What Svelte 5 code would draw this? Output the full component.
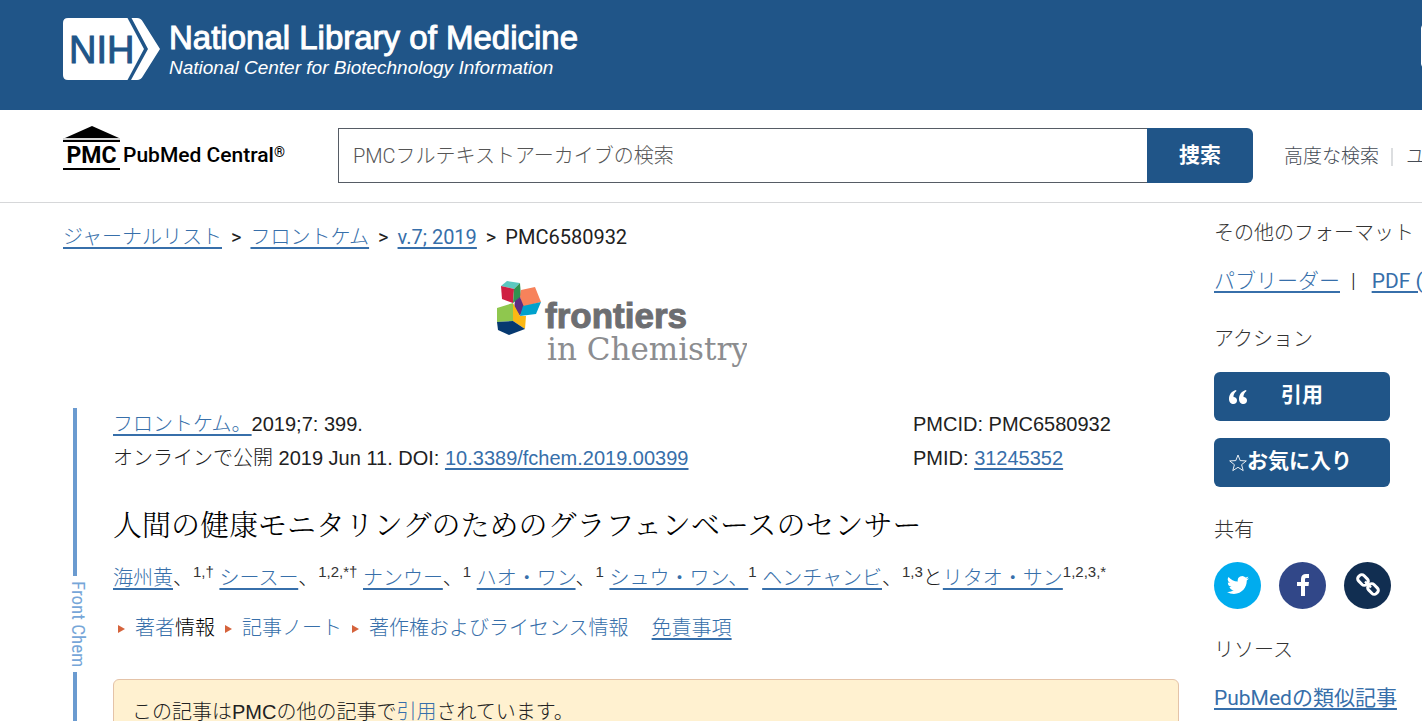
<script>
  let query = $state('');
</script>

<div class="page">
  <header class="top">
    <a class="nlm" href="#home" aria-label="NCBI home">
      <svg width="97" height="62" viewBox="0 0 97 62" aria-hidden="true">
        <path fill="#fff" d="M5 0H64.500L81 31L64.500 62H5Q0 62 0 57V5Q0 0 5 0Z" />
        <path fill="#fff" d="M68.500 0H74Q78 0 80 4L97 31L80 58Q78 62 74 62H68L85 31Z" />
        <text x="6" y="45" class="nih">NIH</text>
      </svg>
      <span class="names">
        <span class="name">National Library of Medicine</span>
        <span class="center">National Center for Biotechnology Information</span>
      </span>
    </a>
    <button class="login" aria-label="Log in"></button>
  </header>

  <div class="searchbar">
    <a class="pmc" href="#pmc">
      <span class="temple">
        <svg width="58" height="18" viewBox="0 0 58 18" aria-hidden="true">
          <path d="M29 0L56 12H2Z" />
          <path fill="#d8d8d8" d="M0 12H57V14H0Z" />
          <path d="M0 14H57V16H0Z" />
        </svg>
        <b>PMC</b>
      </span>
      <span class="central">PubMed Central<span class="reg">®</span></span>
    </a>
    <form class="search" role="search" onsubmit={(e) => e.preventDefault()}>
      <input type="search" bind:value={query} aria-label="PMCフルテキストアーカイブの検索" placeholder="PMCフルテキストアーカイブの検索" />
      <button type="submit">捜索</button>
    </form>
    <nav class="help">
      <a href="#advanced">高度な検索</a>
      <a href="#guide">ユーザーガイド</a>
    </nav>
  </div>

  <div class="body">
    <main>
      <nav class="crumbs">
        <a href="#journals">ジャーナルリスト</a><i>&gt;</i><a href="#front">フロントケム</a><i>&gt;</i><a href="#v7">v.7; 2019</a><i>&gt;</i><span>PMC6580932</span>
      </nav>

      <div class="journal">
        <svg width="252" height="92" viewBox="0 0 252 92" role="img" aria-label="frontiers in Chemistry">
          <path fill="#5cc8c0" d="M6 6L12 1L25 3L19 9Z" />
          <path fill="#cf1f42" d="M6 6L19 9L18 23L7 19Z" />
          <path fill="#2f9150" d="M19 9L25 3L26 17L18 23Z" />
          <path fill="#f7825b" d="M26 10L40 7L46 22L28 27L25 17Z" />
          <path fill="#5b2e82" d="M20 21L25 17L29 27L25 36L19 28Z" />
          <path fill="#00a1cc" d="M28 26L46 22L41 34L25 36Z" />
          <path fill="#8fc74e" d="M2 28L18 23L18 41L2 42Z" />
          <path fill="#fbb814" d="M18 23L25 36L31 36L30 49L18 41Z" />
          <path fill="#063970" d="M2 42L18 41L30 49L14 55L3 50Z" />
          <text x="50" y="48" class="frontiers">frontiers</text>
          <text x="52" y="80" class="chem">in Chemistry</text>
        </svg>
      </div>

      <div class="article">
        <div class="side" aria-hidden="true">
          <span class="rule upper"></span>
          <span class="label">Front Chem</span>
          <span class="rule lower"></span>
        </div>
        <div class="content">
          <div class="meta">
            <div>
              <a href="#journal">フロントケム。</a>2019;7: 399.<br />
              オンラインで公開 2019 Jun 11. DOI: <a href="#doi">10.3389/fchem.2019.00399</a>
            </div>
            <div class="ids">
              PMCID: PMC6580932<br />
              PMID: <a href="#pmid">31245352</a>
            </div>
          </div>
          <h1>人間の健康モニタリングのためのグラフェンベースのセンサー</h1>
          <p class="authors">
            <a href="#a1">海州黄</a>、<sup>1,†</sup> <a href="#a2">シースー</a>、<sup>1,2,*†</sup> <a href="#a3">ナンウー</a>、<sup>1</sup> <a href="#a4">ハオ・ワン</a>、<sup>1</sup> <a href="#a5">シュウ・ワン、</a><sup>1</sup> <a href="#a6">ヘンチャンビ</a>、<sup>1,3</sup>と<a href="#a7">リタオ・サン</a><sup>1,2,3,*</sup>
          </p>
          <div class="notes">
            <a href="#info">著者<span>情報</span></a>
            <a href="#notes">記事ノート</a>
            <a href="#license">著作権およびライセンス情報</a>
            <a class="plain" href="#disclaimer">免責事項</a>
          </div>
          <div class="cited">この記事はPMCの他の記事で<a href="#cited">引用</a>されています。</div>
        </div>
      </div>
    </main>

    <aside>
      <h2>その他のフォーマット</h2>
      <div class="formats"><a href="#reader">パブリーダー</a><i>|</i><a href="#pdf">PDF (3.2M)</a></div>
      <h2>アクション</h2>
      <div class="actions">
        <button>
          <svg width="18" height="14" viewBox="0 0 18 14" aria-hidden="true">
            <path fill="#fff" d="M7 0C3 1 0 4 0 9C0 12 2 14 4.500 14C6.500 14 8 12.500 8 10.500C8 8.500 6.500 7 4.500 7C4.300 4.500 5.500 2.500 7.500 1ZM17 0C13 1 10 4 10 9C10 12 12 14 14.500 14C16.500 14 18 12.500 18 10.500C18 8.500 16.500 7 14.500 7C14.300 4.500 15.500 2.500 17.500 1Z" />
          </svg>
          <span class="cite">引用</span>
        </button>
        <button>
          <svg width="18" height="18" viewBox="0 0 18 18" aria-hidden="true">
            <path fill="none" stroke="#fff" stroke-width="0.900" d="M9 1L11.200 6.600L17.300 6.900L12.600 10.700L14.200 16.600L9 13.300L3.800 16.600L5.400 10.700L0.700 6.900L6.800 6.600Z" />
          </svg>
          <span>お気に入り</span>
        </button>
      </div>
      <h2>共有</h2>
      <div class="share">
        <a class="tw" href="#twitter" aria-label="Twitter">
          <svg width="22" height="22" viewBox="0 0 24 24"><path fill="#fff" d="M23.950 4.570a10 10 0 0 1-2.820.770 4.960 4.960 0 0 0 2.160-2.720c-.950.550-2 .950-3.130 1.180a4.920 4.920 0 0 0-8.380 4.480C7.690 8.090 4.070 6.130 1.640 3.160a4.920 4.920 0 0 0 1.520 6.570 4.900 4.900 0 0 1-2.230-.610v.060a4.920 4.920 0 0 0 3.950 4.830 5 5 0 0 1-2.210.080 4.940 4.940 0 0 0 4.600 3.420A9.870 9.870 0 0 1 0 19.540a14 14 0 0 0 7.550 2.210c9.050 0 14-7.500 14-13.980 0-.210 0-.420-.020-.630a9.940 9.940 0 0 0 2.420-2.570z" /></svg>
        </a>
        <a class="fb" href="#facebook" aria-label="Facebook">
          <svg width="14" height="24" viewBox="0 0 14 24"><path fill="#fff" d="M13 1V5H10.500C9.300 5 9 5.600 9 6.600V9H13L12.500 13H9V23H5V13H1V9H5V6C5 2.600 7 1 10 1Z" /></svg>
        </a>
        <a class="ln" href="#permalink" aria-label="Permalink">
          <svg width="24" height="24" viewBox="0 0 24 24" fill="none" stroke="#fff" stroke-width="3">
            <rect x="1.500" y="3.200" width="11" height="7.600" rx="3" transform="rotate(45 7 7)" />
            <rect x="11.500" y="12.200" width="11" height="7.600" rx="3" transform="rotate(45 17 16)" />
            <path d="M9 8.500L15 14.500" stroke-width="2.400" />
          </svg>
        </a>
      </div>
      <h2>リソース</h2>
      <a class="similar" href="#similar">PubMedの類似記事</a>
    </aside>
  </div>
</div>

<style>
  :global(body) { margin: 0; background: #fff; }
  .page {
    height: 100vh;
    overflow: hidden;
    color: #212121;
    font: 300 20px/30px Roboto, "Noto Sans CJK JP", sans-serif;
  }
  a { color: #376faa; text-decoration-thickness: 2px; text-underline-offset: 3px; }
  i { font-style: normal; }
  button { border: 0; cursor: pointer; font-family: inherit; color: #fff; background: #205588; }

  .top {
    box-sizing: border-box;
    height: 110px;
    padding: 18px 0 0 63px;
    display: flex;
    justify-content: space-between;
    background: #205588;
    overflow: hidden;
  }
  .nlm { display: flex; gap: 9px; color: #fff; text-decoration: none; font-family: "Liberation Sans", Arial, sans-serif; white-space: nowrap; }
  .nih { font: 400 38px "Liberation Sans", Arial, sans-serif; fill: #205588; stroke: #205588; stroke-width: 1px; }
  .names { display: flex; flex-direction: column; font-weight: 400; }
  .name { font-size: 33px; line-height: 40px; -webkit-text-stroke: 1px #fff; }
  .center { font-size: 19px; line-height: 20px; font-style: italic; }
  .login { box-sizing: border-box; width: 90px; height: 44px; margin: 6px -89px 0 0; flex: none; border: 1px solid #fff; border-radius: 4px; }

  .searchbar {
    box-sizing: border-box;
    height: 93px;
    padding: 18px 0 19px 63px;
    display: flex;
    border-bottom: 1px solid #d6d7d9;
  }
  .pmc { width: 275px; flex: none; display: flex; gap: 2px; color: #000; text-decoration: none; }
  .temple { width: 58px; height: 44px; margin-top: -2px; display: flex; flex-direction: column; align-items: center; }
  .temple svg { display: block; flex: none; }
  .temple b { font: 700 23px/24px Roboto, sans-serif; border-bottom: 2px solid #000; width: 57px; text-align: center; align-self: flex-start; }
  .central { font-weight: 500; font-size: 21px; line-height: 54px; display: flex; }
  .reg { font-size: 14px; line-height: 48px; }
  .search { flex: 1; display: flex; height: 55px; }
  .search input {
    box-sizing: border-box;
    flex: 1;
    min-width: 0;
    padding: 0 14px;
    border: 1px solid #565c65;
    border-right: 0;
    border-radius: 0;
    appearance: none;
    font: inherit;
  }
  .search input::placeholder { color: #555; opacity: 1; }
  .search button { width: 106px; padding: 0 0 5px; border-radius: 0 6px 6px 0; font-size: 21px; font-weight: 700; }
  .help { width: 138px; margin-left: 31px; display: flex; white-space: nowrap; font-size: 19px; line-height: 58px; }
  .help a { color: #464c55; text-decoration: none; }
  .help a + a { height: 58px; margin-left: 12px; display: flex; align-items: center; }
  .help a + a::before { content: ""; width: 2px; height: 18px; margin-right: 13px; background: #dcdee0; }

  .body { display: flex; gap: 35px; padding-left: 63px; }
  main { flex: 1; min-width: 0; }
  .crumbs { padding-top: 19px; white-space: nowrap; font-weight: 400; }
  .crumbs a { font-weight: 300; }
  .crumbs a[href="#v7"] { font-weight: 400; }
  .crumbs i { margin: 0 9px; }
  .journal { display: flex; justify-content: center; padding-top: 28px; }
  .journal svg { display: block; }
  .frontiers { font: 700 35px "Liberation Sans", Arial, sans-serif; fill: #6d6e71; stroke: #6d6e71; stroke-width: 1px; }
  .chem { font: 400 31px "DejaVu Serif", serif; fill: #8c8d90; }

  .article { display: flex; margin-top: 36px; font-family: "Liberation Sans", "Noto Sans CJK JP", sans-serif; }
  .side { width: 50px; flex: none; display: flex; flex-direction: column; align-items: flex-start; }
  .rule { width: 4px; margin-left: 10px; background: #6b9bd0; }
  .upper { height: 168px; flex: none; }
  .lower { flex: 1; min-height: 50px; }
  .label { writing-mode: vertical-rl; height: 96px; margin-left: 3px; line-height: 24px; text-align: center; color: #76a6d8; font-family: "Liberation Sans Narrow", "Roboto Condensed", "Liberation Sans", sans-serif; font-size: 19px; font-weight: 400; white-space: nowrap; }
  .content { flex: 1; min-width: 0; margin-top: -1px; }
  .meta { display: flex; justify-content: space-between; line-height: 34px; white-space: nowrap; }
  .ids { width: 266px; }
  h1 { margin: 22px 0 0; font: 300 29px/54px "Noto Serif CJK JP", "Liberation Serif", "Noto Sans CJK JP", serif; color: #000; white-space: nowrap; }
  .authors { margin: 10px 0 0; line-height: 34px; white-space: nowrap; }
  sup { font-size: 15px; line-height: 0; color: #333; }
  .notes { margin-top: 16px; display: flex; white-space: nowrap; line-height: 34px; }
  .notes a { text-decoration: none; margin-right: 7px; }
  .notes a:not(.plain)::before { content: ""; display: inline-block; border: 4px solid transparent; border-left: 7px solid #d5633c; border-right: 0; margin: 0 10px 2px 5px; }
  .notes a:not(.plain) + a:not(.plain)::before { margin-left: 3px; }
  .notes span { color: #000; }
  .notes .plain { margin-left: 16px; text-decoration: underline 2px; }
  .cited { box-sizing: border-box; margin-top: 34px; min-height: 80px; padding: 15px 18px; border: 1px solid #e4c3a8; border-radius: 6px; background: #fff1d0; line-height: 34px; }
  .cited a { text-decoration: none; }

  aside { width: 208px; flex: none; white-space: nowrap; padding-top: 15px; }
  h2 { margin: 0; font-size: 20px; line-height: 30px; font-weight: 300; color: #333; }
  .formats { margin: 18px 0 28px; font-weight: 400; font-size: 21px; }
  .formats a:first-child { font-weight: 300; }
  .formats i { margin: 0 16px 0 11px; font-weight: 300; }
  .actions { display: flex; flex-direction: column; gap: 17px; margin: 18px 0 28px; }
  .actions button { width: 176px; height: 49px; padding: 0 15px; display: flex; align-items: center; border-radius: 6px; font-size: 21px; font-weight: 700; line-height: 30px; }
  .actions span { margin-bottom: 3px; }
  .actions .cite { margin-left: 34px; }
  .share { display: flex; gap: 18px; margin: 17px 0 26px; }
  .share a { width: 47px; height: 47px; border-radius: 50%; display: grid; place-items: center; }
  .share svg { margin-bottom: 2px; }
  .tw { background: #00acee; }
  .fb { background: #314788; }
  .ln { background: #112e51; }
  .similar { display: block; margin-top: 18px; font-size: 21px; font-weight: 400; }
</style>
